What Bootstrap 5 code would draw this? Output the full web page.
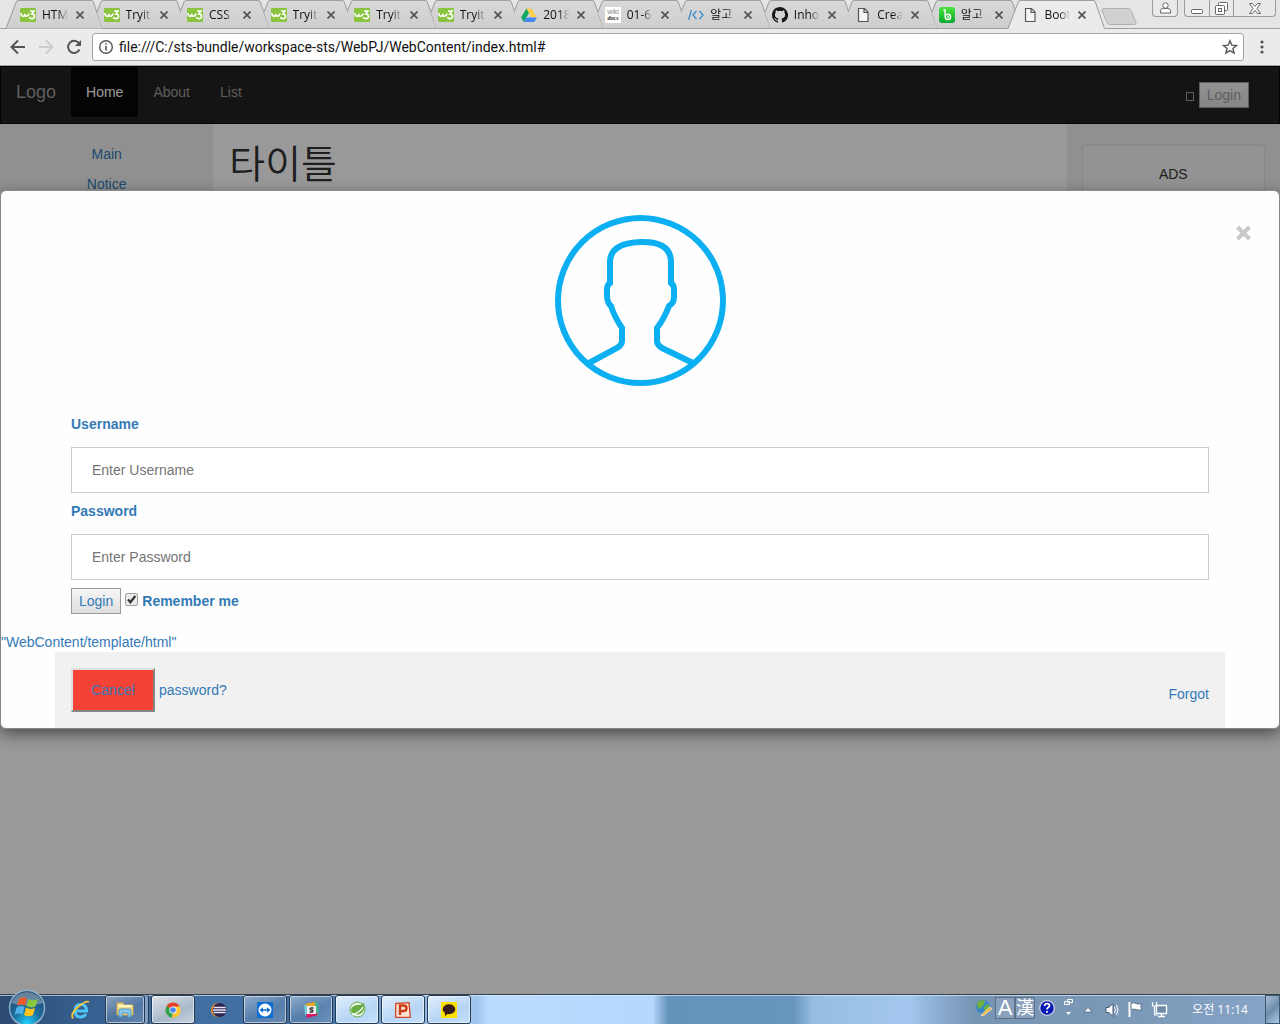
<!DOCTYPE html>
<html lang="ko">
<head>
<meta charset="utf-8">
<meta name="viewport" content="width=device-width, initial-scale=1">
<title>Bootstrap Example</title>
<link href="https://cdn.jsdelivr.net/npm/bootstrap@5.3.0/dist/css/bootstrap.min.css" rel="stylesheet">
<style>
body{font-family:"Liberation Sans","Noto Sans CJK KR",Arial,sans-serif;font-size:14px;line-height:20px;color:#333;background:#fff}
a{text-decoration:none}
.desk{min-height:100vh}
svg{display:block}
/* browser frame */
.strip{height:29px;background:#e5e5e5;border-bottom:1px solid #a0a0a0;padding-left:6px;font-family:"Open Sans","Noto Sans CJK KR",sans-serif;font-size:12px}
.tabs{min-width:0;height:29px;z-index:1}
.tab{flex:1 1 0;min-width:0;height:29px;position:relative;padding:7px 0 0 14px;color:#222}
.tab-shape{position:absolute;left:0;top:0;width:calc(100% + 13px);height:29px}
.tab-in{position:relative;gap:6px;height:16px}
.tab-title{width:26px;line-height:16px;white-space:nowrap;overflow:hidden;-webkit-mask-image:linear-gradient(90deg,#000 60%,transparent);mask-image:linear-gradient(90deg,#000 60%,transparent);color:#111}
.tab-x,.plain{border:0;background:none;padding:0}
.tab-x{margin-left:2px;display:block}
.strip-end{width:188px;height:28px;padding:0 4px 0 9px}
.winbox{height:17px;border:1px solid #9b9b9b;border-top:0;border-radius:0 0 4px 4px;background:#e9e9e9}
.winbox button{height:16px;border:0;background:none;padding:0;display:flex;align-items:center;justify-content:center}
.winbox button+button{border-left:1px solid #9b9b9b}
.winbox.ctl{margin-left:6px}
.w-s{width:24px}.w-l{width:42px}
.tools{height:37px;background:#ebebeb;border-bottom:1px solid #a0a0a0;padding:0 16px 0 10px}
.tools .nav-ic{gap:12px;width:82px}
.omni{height:28px;background:#fff;border:1px solid #a6a6a6;border-radius:3px;padding:0 5px;margin-right:16px}
.omni input{border:0;outline:0;padding:0;background:none;font-family:Roboto,"Noto Sans CJK KR",sans-serif;font-size:14px;line-height:20px;height:20px;color:#111;min-width:0;margin-left:5px}
/* page */
.stack{display:grid;grid-template:1fr/minmax(0,1fr)}
.stack>*{grid-area:1/1}
.topnav{background:#222;border:1px solid #080808;height:58px}
.topnav .brand{font-size:18px;padding:15px;color:#9d9d9d}
.topnav .lnk{padding:15px;height:50px;color:#9d9d9d}
.topnav .lnk.on{background:#080808;color:#fff}
.login-link{padding:15px 30px 0 0;gap:5px;color:#9d9d9d}
.tofu{width:8px;height:9px;border:1px solid #9d9d9d;margin-top:10px}
.btn-old{height:26px;padding:0 7px;border:1px solid #9b9b9b;background:linear-gradient(#f6f6f6,#dedede);font-size:14px;line-height:20px;color:#337ab7}
.topnav .btn-old{color:#9d9d9d}
.side{background:#f1f1f1;padding:20px 15px}
.side p{margin-bottom:10px}
.side a,.foot a{color:#337ab7}
.well{min-height:20px;padding:19px;border:1px solid #e3e3e3;border-radius:4px;background:#f5f5f5;box-shadow:inset 0 1px 1px rgba(0,0,0,.05)}
.ttl{font-size:39px;line-height:42px;font-weight:350;margin:20px 0 10px}
.main{padding:0 16px}
.shade{background:rgba(0,0,0,.4);padding-top:60px;z-index:2;color:#337ab7}
.sheet{margin-top:5%;background:#fefefe;border:1px solid #888;border-radius:6px;box-shadow:0 5px 15px rgba(0,0,0,.5)}
.face{padding:24px 24px 12px;position:relative}
.close-x{position:absolute;right:27px;top:33px}
.wrap{max-width:1170px;margin:0 auto;padding:16px}
form.wrap{padding-bottom:18px}
.fld-label{font-weight:700;margin-bottom:13px;display:block}
.fld{display:block;width:100%;height:46px;margin:0 0 8px;padding:12px 20px;border:1px solid #ccc;font-size:14px;line-height:20px;color:#555}
.fld::placeholder{color:#757575;opacity:1}
.tick{appearance:none;width:13px;height:13px;border:1px solid #a0a0a0;border-radius:2px;margin:5px 0 0;background:#e9e9e9 url("data:image/svg+xml,%3Csvg xmlns='http://www.w3.org/2000/svg' viewBox='0 0 11 11'%3E%3Cpath d='M2 5.5l2.400 2.800L9.300 2' fill='none' stroke='%23333' stroke-width='2.2'/%3E%3C/svg%3E")}
.tick-label{font-weight:700;padding-top:3px}
.foot{background:#f1f1f1}
.cancel{height:44px;width:84px;border:2px solid;border-color:#e0e0e0 #868686 #868686 #e0e0e0;background:#f44336;color:#337ab7;padding:0}
/* taskbar */
.taskbar{height:30px;border-top:1px solid #33414f;box-shadow:inset 0 1px 0 rgba(230,240,255,.65);z-index:3;color:#fff;
background:linear-gradient(90deg,#2c4a72 0,#365d8d 6%,#426fa2 14%,#426fa2 24%,#4f7fb0 28%,#7aa4cf 30%,#a7cdf4 36.5%,#9fc5ee 37.2%,#badcff 38.2%,#b5d7fb 51%,#6392ba 52.2%,#6795bd 62%,#98bde3 63.5%,#a3c7ee 71%,#8db0d6 73%,#7894b3 76%,#7b98b8 88%,#86a5c6 100%)}
.start{width:44px;height:37px;margin:-7px 0 0 5px}
.task{width:44px;height:29px;border:1px solid #253950;border-radius:3px;box-shadow:inset 0 0 0 1px rgba(255,255,255,.55);background:linear-gradient(155deg,rgba(255,255,255,.42),rgba(255,255,255,.1) 55%,rgba(255,255,255,.2));padding:0;display:flex;align-items:center;justify-content:center}
.task.hot{background:linear-gradient(155deg,#dfe4ea,#a9b8ca 60%,#c9d4e0)}
.task.lit{background:linear-gradient(155deg,#e2effc,#b5d5f5 60%,#c5e0fb)}
.task.bare{border-color:transparent;box-shadow:none;background:none}
.task.pile{width:40px;margin-right:4px;box-shadow:inset 0 0 0 1px rgba(255,255,255,.55),3px 0 0 #7f9fc4,4px 0 0 #253950}
.tasks{gap:2px;margin-left:10px}
.clock{font-family:"Open Sans","Noto Sans CJK KR",sans-serif;font-size:12px;line-height:29px;width:76px;text-align:center;margin-left:14px}
.tray{height:29px}
.ime{width:20px;height:22px;border:1px solid #5c7188;background:rgba(255,255,255,.12);font-size:18px;line-height:20px;text-align:center}
.ime.lat{font-size:22px;margin-left:2px}
.help{margin-left:3px}.g7{margin-left:7px}.g8{margin-left:8px}.g9{margin-left:9px}.g12{margin-left:12px}
.peek{width:15px;height:29px;border:1px solid #40566e;background:linear-gradient(135deg,#a8bed5,#6e8dad 50%,#a9cdec)}
</style>
<script src="https://cdn.jsdelivr.net/npm/bootstrap@5.3.0/dist/js/bootstrap.bundle.min.js"></script>
</head>
<body>
<svg width="0" height="0" class="position-absolute" aria-hidden="true">
<defs><linearGradient id="tg" x2="0" y2="1"><stop stop-color="#d9d9d9"/><stop offset="1" stop-color="#cecece"/></linearGradient>
<linearGradient id="gb" x2="0" y2="1"><stop stop-color="#4be33c"/><stop offset="1" stop-color="#03a830"/></linearGradient></defs>
<symbol id="shape" viewBox="0 0 96 29" preserveAspectRatio="none"><path d="M11 .5L7 12l5 16h84L87 2.500q-1-2-2-2H13q-1 0-2 1z" fill="url(#tg)"/><path d="M7 12L11 2q1-1.500 2-1.500h72q1 0 2 2L96 28.500" fill="none" stroke="#a0a0a0"/></symbol>
<symbol id="shape1" viewBox="0 0 96 29" preserveAspectRatio="none"><path d="M0 28.500L10 2.500q1-2 2-2h73q1 0 2 2L96 28.500" fill="url(#tg)" stroke="#a0a0a0"/></symbol>
<symbol id="shapeA" viewBox="0 0 96 29" preserveAspectRatio="none"><path d="M0 28.500L10 2.500q1-2 2-2h73q1 0 2 2L96 28.500V29H0z" fill="#ebebeb"/><path d="M0 28.500L10 2.500q1-2 2-2h73q1 0 2 2L96 28.500" fill="none" stroke="#a0a0a0"/></symbol>
<symbol id="x" viewBox="0 0 8 8"><path d="M.5.5l7 7M7.500.5l-7 7" stroke="#555" stroke-width="1.700"/></symbol>
<symbol id="w3" viewBox="0 0 16 16"><rect y="1" width="16" height="14" rx="1" fill="#8ac43f"/><path d="M.8 6q.4 3.200 2.200 3.200t1.700-2.400q0 2.400 1.700 2.400T9 6.500M10 4h4L11.800 7q2.700 0 2.700 2.300T12 11.700q-2 0-2.700-1.500" fill="none" stroke="#fff" stroke-width="1.600"/></symbol>
<symbol id="drive" viewBox="0 0 16 16"><path d="M5.500 1.500L0 10.500l2.700 4.500L8 6z" fill="#11a861"/><path d="M5.500 1.500h5l5.500 9h-5.300z" fill="#ffcf48"/><path d="M5.300 10.500H16L13.300 15H2.700z" fill="#4387f5"/></symbol>
<symbol id="doc" viewBox="0 0 16 16"><path d="M3.500 1.500h6l3.500 3.500v9.500H3.500zM9 1.500V5.500h4" fill="#f4f4f4" stroke="#555" stroke-width="1.200"/></symbol>
<symbol id="code" viewBox="0 0 16 16"><path d="M3.500 3L.5 13M8.500 4L5 8l3.500 4M11.500 4L15 8l-3.500 4" fill="none" stroke="#3f8ec7" stroke-width="1.400"/></symbol>
<symbol id="gh" viewBox="0 0 16 16"><path fill="#161616" d="M8 0C3.580 0 0 3.580 0 8c0 3.540 2.290 6.530 5.470 7.590.4.070.55-.17.55-.38v-1.490c-2.010.37-2.530-.49-2.690-.94-.09-.23-.48-.94-.82-1.130-.28-.15-.68-.52-.01-.53.63-.01 1.080.58 1.230.82.72 1.210 1.870.87 2.330.66.07-.52.28-.87.51-1.070-1.780-.2-3.640-.89-3.640-3.950 0-.87.31-1.590.82-2.150-.08-.2-.36-1.020.08-2.120 0 0 .67-.21 2.200.82a7.600 7.600 0 0 1 4 0c1.530-1.040 2.200-.82 2.200-.82.44 1.100.16 1.920.08 2.120.51.56.82 1.270.82 2.150 0 3.070-1.870 3.750-3.650 3.950.29.25.54.73.54 1.480v2.200c0 .21.15.46.55.38A8 8 0 0 0 8 0z"/></symbol>
<symbol id="band" viewBox="0 0 16 16"><rect width="16" height="16" rx="3" fill="url(#gb)"/><path d="M4.500 3h1.700v7.500a2.700 2.700 0 1 0 2.700-3.300q-1.700 0-2.700 1.300" fill="none" stroke="#fff" stroke-width="1.500"/><circle cx="8.900" cy="10" r=".9" fill="#fff"/></symbol>
</svg>
<div class="desk d-flex flex-column">
<header>
<div class="strip d-flex">
<nav class="tabs d-flex flex-grow-1" aria-label="Tabs">
<div class="tab"><svg class="tab-shape"><use href="#shape1"/></svg><div class="tab-in d-flex align-items-center"><svg width="16" height="16"><use href="#w3"/></svg><span class="tab-title">HTM</span><button class="tab-x" aria-label="Close"><svg width="8" height="8"><use href="#x"/></svg></button></div></div>
<div class="tab"><svg class="tab-shape"><use href="#shape"/></svg><div class="tab-in d-flex align-items-center"><svg width="16" height="16"><use href="#w3"/></svg><span class="tab-title">Tryit</span><button class="tab-x" aria-label="Close"><svg width="8" height="8"><use href="#x"/></svg></button></div></div>
<div class="tab"><svg class="tab-shape"><use href="#shape"/></svg><div class="tab-in d-flex align-items-center"><svg width="16" height="16"><use href="#w3"/></svg><span class="tab-title">CSS</span><button class="tab-x" aria-label="Close"><svg width="8" height="8"><use href="#x"/></svg></button></div></div>
<div class="tab"><svg class="tab-shape"><use href="#shape"/></svg><div class="tab-in d-flex align-items-center"><svg width="16" height="16"><use href="#w3"/></svg><span class="tab-title">Tryit</span><button class="tab-x" aria-label="Close"><svg width="8" height="8"><use href="#x"/></svg></button></div></div>
<div class="tab"><svg class="tab-shape"><use href="#shape"/></svg><div class="tab-in d-flex align-items-center"><svg width="16" height="16"><use href="#w3"/></svg><span class="tab-title">Tryit</span><button class="tab-x" aria-label="Close"><svg width="8" height="8"><use href="#x"/></svg></button></div></div>
<div class="tab"><svg class="tab-shape"><use href="#shape"/></svg><div class="tab-in d-flex align-items-center"><svg width="16" height="16"><use href="#w3"/></svg><span class="tab-title">Tryit</span><button class="tab-x" aria-label="Close"><svg width="8" height="8"><use href="#x"/></svg></button></div></div>
<div class="tab"><svg class="tab-shape"><use href="#shape"/></svg><div class="tab-in d-flex align-items-center"><svg width="16" height="16"><use href="#drive"/></svg><span class="tab-title">2018</span><button class="tab-x" aria-label="Close"><svg width="8" height="8"><use href="#x"/></svg></button></div></div>
<div class="tab"><svg class="tab-shape"><use href="#shape"/></svg><div class="tab-in d-flex align-items-center"><svg width="16" height="16" viewBox="0 0 16 16"><rect width="16" height="16" fill="#fff"/><text x="8" y="7" font-size="7" text-anchor="middle" fill="#888" font-family="Liberation Sans">wiki</text><text x="8" y="13" font-size="6" font-weight="700" font-style="italic" text-anchor="middle" fill="#222" font-family="Liberation Serif">docs</text></svg><span class="tab-title">01-6</span><button class="tab-x" aria-label="Close"><svg width="8" height="8"><use href="#x"/></svg></button></div></div>
<div class="tab"><svg class="tab-shape"><use href="#shape"/></svg><div class="tab-in d-flex align-items-center"><svg width="16" height="16"><use href="#code"/></svg><span class="tab-title">알고</span><button class="tab-x" aria-label="Close"><svg width="8" height="8"><use href="#x"/></svg></button></div></div>
<div class="tab"><svg class="tab-shape"><use href="#shape"/></svg><div class="tab-in d-flex align-items-center"><svg width="16" height="16"><use href="#gh"/></svg><span class="tab-title">Inho</span><button class="tab-x" aria-label="Close"><svg width="8" height="8"><use href="#x"/></svg></button></div></div>
<div class="tab"><svg class="tab-shape"><use href="#shape"/></svg><div class="tab-in d-flex align-items-center"><svg width="16" height="16"><use href="#doc"/></svg><span class="tab-title">Crea</span><button class="tab-x" aria-label="Close"><svg width="8" height="8"><use href="#x"/></svg></button></div></div>
<div class="tab"><svg class="tab-shape"><use href="#shape"/></svg><div class="tab-in d-flex align-items-center"><svg width="16" height="16"><use href="#band"/></svg><span class="tab-title">알고</span><button class="tab-x" aria-label="Close"><svg width="8" height="8"><use href="#x"/></svg></button></div></div>
<div class="tab"><svg class="tab-shape"><use href="#shapeA"/></svg><div class="tab-in d-flex align-items-center"><svg width="16" height="16"><use href="#doc"/></svg><span class="tab-title">Boot</span><button class="tab-x" aria-label="Close"><svg width="8" height="8"><use href="#x"/></svg></button></div></div>
</nav>
<div class="strip-end d-flex align-items-start">
<button class="plain pt-2 lh-1" aria-label="New tab"><svg width="36" height="17"><path d="M3 .5h24q2 0 3 2l5 12q.5 2-1.500 2H9q-2 0-3-2l-5-12q-.5-2 2-2z" fill="#d0d0d0" stroke="#b0b0b0"/></svg></button>
<div class="winbox d-flex ms-auto"><button class="w-s" aria-label="Profile"><svg width="11" height="12" viewBox="0 0 11 12"><circle cx="5.500" cy="3.500" r="2.700" fill="#fff" stroke="#666"/><path d="M.5 11V8.500q0-2 3-2h4q3 0 3 2V11z" fill="#fff" stroke="#666"/></svg></button></div>
<div class="winbox ctl d-flex">
<button class="w-s" aria-label="Minimize"><svg width="12" height="12"><rect x=".5" y="7.500" width="11" height="4" rx="1" fill="#fff" stroke="#666"/></svg></button>
<button class="w-s" aria-label="Restore"><svg width="13" height="13"><rect x="3.500" y=".5" width="9" height="8" rx="1" fill="#fff" stroke="#666"/><rect x=".5" y="3.500" width="9" height="9" rx="1" fill="#fff" stroke="#666"/><rect x="3.500" y="6.500" width="3" height="3" fill="none" stroke="#666"/></svg></button>
<button class="w-l" aria-label="Close window"><svg width="12" height="11"><path d="M.5.5h3L6 3.500 8.500.5h3L8 5.500l3.500 5h-3L6 7.500l-2.500 3h-3L4 5.500z" fill="#fff" stroke="#666"/></svg></button></div>
</div>
</div>
<div class="tools d-flex align-items-center">
<div class="nav-ic d-flex align-items-center">
<button class="plain" aria-label="Back"><svg width="16" height="16"><path d="M15 8H2M8 1.500L1.500 8 8 14.500" fill="none" stroke="#555" stroke-width="2"/></svg></button>
<button class="plain" aria-label="Forward"><svg width="16" height="16"><path d="M1 8h13M8 1.500L14.500 8 8 14.500" fill="none" stroke="#ccc" stroke-width="2"/></svg></button>
<button class="plain" aria-label="Reload"><svg width="16" height="16"><path d="M13.500 10.500a6 6 0 1 1-.8-6.500" fill="none" stroke="#555" stroke-width="2"/><path d="M15 1v6H9z" fill="#555"/></svg></button>
</div>
<div class="omni d-flex align-items-center flex-grow-1">
<svg width="16" height="16"><circle cx="8" cy="8" r="6.300" fill="none" stroke="#555" stroke-width="1.400"/><path d="M8 7v4.500M8 4.200v1.600" stroke="#555" stroke-width="1.600"/></svg>
<input class="flex-grow-1" type="text" aria-label="Address" value="file:///C:/sts-bundle/workspace-sts/WebPJ/WebContent/index.html#">
<button class="plain" aria-label="Bookmark"><svg width="16" height="16" viewBox="0 0 16 16"><path d="M8 1.800l1.800 4.400 4.700.3-3.600 3 1.200 4.600L8 11.600l-4.100 2.500 1.200-4.600-3.600-3 4.700-.3z" fill="none" stroke="#555" stroke-width="1.400"/></svg></button>
</div>
<button class="plain" aria-label="Menu"><svg width="4" height="14"><g fill="#555"><circle cx="2" cy="2" r="1.600"/><circle cx="2" cy="7" r="1.600"/><circle cx="2" cy="12" r="1.600"/></g></svg></button>
</div>
</header>
<main class="stack flex-grow-1">
<div class="d-flex flex-column">
<nav class="topnav d-flex">
<a class="brand" href="#">Logo</a>
<a class="lnk on" href="#">Home</a><a class="lnk" href="#">About</a><a class="lnk" href="#">List</a>
<div class="login-link d-flex ms-auto align-items-start"><span class="tofu"></span><button class="btn-old">Login</button></div>
</nav>
<div class="row g-0">
<aside class="col-2 side text-center"><p><a href="#">Main</a></p><p><a href="#">Notice</a></p></aside>
<section class="col-8 main"><h1 class="ttl">타이틀</h1></section>
<aside class="col-2 side text-center"><div class="well"><p>ADS</p></div></aside>
</div>
</div>
<div class="shade">
<div class="sheet" role="dialog" aria-label="Login">
<div class="face d-flex justify-content-center">
<svg width="171" height="171" viewBox="0 0 171 171" fill="none" stroke="#0caff2" stroke-width="6"><circle cx="85.500" cy="85.500" r="82.500"/><path d="M34 148L62 133q5-3 5-7V113Q59 101 56 91Q52 88 52 80V74Q52 70 55 68V46Q56 28 85.500 27T116 46V68Q119 70 119 74V82Q119 88 114 91Q109 104 102 113V126q0 4 5 7L138 148"/></svg>
<button class="plain close-x" aria-label="Close"><svg width="17" height="17"><path d="M2.500 3L14.500 15M14.500 3L2.500 15" stroke="#c8c8c8" stroke-width="4"/></svg></button>
</div>
<form class="wrap">
<label class="fld-label" for="u">Username</label><input class="fld" id="u" type="text" placeholder="Enter Username">
<label class="fld-label" for="p">Password</label><input class="fld" id="p" type="password" placeholder="Enter Password">
<div class="d-flex gap-1"><button class="btn-old" type="button">Login</button><input class="tick" type="checkbox" id="r" checked><label class="tick-label" for="r">Remember me</label></div>
</form>
<div>"WebContent/template/html"</div>
<div class="wrap foot d-flex align-items-center gap-1"><button class="cancel" type="button">Cancel</button><span>password?</span><a class="ms-auto pt-2" href="#">Forgot</a></div>
</div>
</div>
</main>
<footer class="taskbar d-flex">
<button class="plain start" aria-label="Start"><svg width="44" height="37" viewBox="0 0 44 37"><defs><radialGradient id="orb" cx=".5" cy=".95" r=".9"><stop stop-color="#1fd4ff"/><stop offset=".45" stop-color="#1c6f9f"/><stop offset="1" stop-color="#24486c"/></radialGradient></defs><circle cx="22" cy="20" r="17.500" fill="url(#orb)" stroke="#8fb0c8" stroke-width="1.500"/><path d="M6 15Q12 4 22 4t16 11Q22 20 6 15z" fill="#fff" opacity=".3"/><path d="M14 11q4-3 8-.5l-2 7q-4-2-8 .5z" fill="#ee5a28"/><path d="M23.500 11q4 2.500 9.500 0l-2.500 7.500q-5 2-9-.5z" fill="#8dc63f"/><path d="M11.500 19.500q4-2.500 8-.5l-2 7.500q-4-2-8 .5z" fill="#4fb1ea"/><path d="M21 19.500q4 2.500 9 .5L28 27q-5 2.500-9 0z" fill="#fdc51a"/></svg></button>
<div class="tasks d-flex">
<button class="task bare" aria-label="Internet Explorer"><svg width="20" height="20" viewBox="0 0 20 20" fill="none"><path d="M15 14q-2 3-5.500 3Q4 17 4 10.500T10 4.500q5.500 0 5.500 6.500H5" stroke="#4cc3f4" stroke-width="3"/><path d="M2 18.500Q-1 14 7 7T18 2" stroke="#f5c63c" stroke-width="1.800"/></svg></button>
<button class="task pile" aria-label="Explorer"><svg width="18" height="17" viewBox="0 0 18 17"><path d="M1 2h6l1 2h9v10H1z" fill="#f3dc86" stroke="#d1ac48"/><path d="M2 5h14" stroke="#fff6c8" stroke-width="2"/><path d="M3 16V10q0-2 2-2h8q2 0 2 2v6h-3v-4H6v4z" fill="#8cc9ef" stroke="#4a97c9"/></svg></button>
<button class="task hot" aria-label="Chrome"><svg width="16" height="16" viewBox="0 0 16 16"><circle cx="8" cy="8" r="7.500" fill="#fcc934"/><path d="M8 8L1.500 4.250A7.500 7.500 0 0 1 14.500 4.250z" fill="#e1402f"/><path d="M8 8V4.500h6.700A7.500 7.500 0 0 1 8 15.500z" fill="#fcc934"/><path d="M8 8l-1 7.500A7.500 7.500 0 0 1 1.500 4.250z" fill="#31a350"/><circle cx="8" cy="8" r="3.600" fill="#fff"/><circle cx="8" cy="8" r="2.800" fill="#4a87ee"/></svg></button>
<button class="task bare" aria-label="Eclipse"><svg width="16" height="16" viewBox="0 0 16 16"><circle cx="7" cy="8" r="7" fill="#f7941e"/><circle cx="8.500" cy="8" r="7" fill="#2b2250"/><path d="M2.500 5.500h12M2 8h13M2.500 10.500h12" stroke="#e9e7f2" stroke-width="1.300"/></svg></button>
<button class="task" aria-label="TeamViewer"><svg width="16" height="16" viewBox="0 0 16 16"><path fill="#0b6ed0" d="M0 0h16v16H0z"/><circle cx="8" cy="8" r="6.500" fill="#fff"/><path d="M2.500 8l3.500-2.700v1.900h4V5.300L13.500 8 10 10.700V8.800H6v1.900z" fill="#0b6ed0"/></svg></button>
<button class="task" aria-label="Slack"><svg width="15" height="16" viewBox="0 0 15 16"><path d="M1 2l10-2 1 4-9 2z" fill="#e9a820"/><path d="M11 0l3 1 1 12-3 1z" fill="#3eb890"/><path d="M0 3l3 1 1 10-3-1z" fill="#70cadb"/><path d="M2 12l10-2 2 3-11 3z" fill="#e01563"/><path d="M3 4h9v8H3z" fill="#eee"/><path d="M9.500 6H7q-1 0-1 1t1.500 1 1.500 1-1 1H5.500" fill="none" stroke="#333" stroke-width="1.300"/></svg></button>
<button class="task lit" aria-label="Spring"><svg width="17" height="17" viewBox="0 0 17 17"><circle cx="8.500" cy="8.500" r="7.500" fill="#e9f4e4" stroke="#68ac45"/><path d="M15 1Q17 13 8 13.500 2 13 2 8.500 3.500 4 9 4T15 1z" fill="#68ac45"/><path d="M3 13.500Q11 12 14 6" stroke="#fff" fill="none" stroke-width="1.400"/></svg></button>
<button class="task lit" aria-label="PowerPoint"><svg width="16" height="16" viewBox="0 0 16 16"><path d="M.7 1.500L14 .7l1.300 14.600H.7z" fill="#fbe0d2" stroke="#d24625" stroke-width="1.300"/><path d="M5 13V3.500h3.500q3 0 3 2.700t-3 2.800H6" fill="none" stroke="#cb3d16" stroke-width="2.400"/></svg></button>
<button class="task lit" aria-label="KakaoTalk"><svg width="16" height="16" viewBox="0 0 16 16"><path fill="#fbe000" d="M0 0h16v16H0z"/><ellipse cx="8" cy="7.300" rx="6.200" ry="5" fill="#371d1e"/><path d="M4 10v4l4-3z" fill="#371d1e"/></svg></button>
</div>
<div class="tray d-flex align-items-center ms-auto">
<svg class="mb-1" width="18" height="18" viewBox="0 0 18 18"><circle cx="8" cy="8" r="7" fill="#3b86c4"/><path d="M2 4q4-4 8-2l-2 5-5 3zM9 8l5-3v5l-4 5z" fill="#6fb53c"/><path d="M6 16l9-8 2 2-9 7z" fill="#f5b335" stroke="#fff" stroke-width=".6"/></svg>
<span class="ime lat mb-1">A</span><span class="ime mb-1">漢</span>
<svg class="help mb-1" width="18" height="18" viewBox="0 0 18 18"><circle cx="9" cy="9" r="7.300" fill="#0a1bb5" stroke="#c8cede" stroke-width="1.300"/><path d="M6.500 7q0-2.300 2.500-2.300t2.500 2q0 1-1.300 1.800T9 10.500M9 12v1.700" fill="none" stroke="#fff" stroke-width="1.700"/></svg>
<svg class="g8 mb-1" width="10" height="20" viewBox="0 0 10 20"><path d="M3.500 1.500h5v3h-5zM.5 3.500h5v3h-5z" fill="#7894b3" stroke="#fff"/><path d="M2 14h5l-2.500 3z" fill="#fff"/></svg>
<svg class="g9" width="10" height="7"><path d="M1 6l4-4.500L9 6z" fill="#fff" stroke="#4c6178" stroke-width=".7"/></svg>
<svg class="g12" width="15" height="16" viewBox="0 0 15 16"><path d="M1 5.500h3L8 1.500v13l-4-4H1z" fill="#fff" stroke="#465b72"/><path d="M9.500 5q2 3 0 6M11.500 3q3 5 0 10" fill="none" stroke="#fff"/></svg>
<svg class="g7" width="16" height="17" viewBox="0 0 16 17"><path d="M2.500 1v15" stroke="#fff" stroke-width="2"/><path d="M4 2.500q3-1.500 5 0t6 0l-1.500 3L15 8.500q-4 1-6 0t-5 0z" fill="#fff" stroke="#465b72" stroke-width=".7"/></svg>
<svg class="g8" width="17" height="17" viewBox="0 0 17 17"><path d="M5.500 4.500h10v8h-10zM7 15.500h7M10.500 13v3" fill="#6f8aa8" stroke="#fff" stroke-width="1.400"/><path d="M1.500 1v4h4V1M3.500 5v9h3" fill="none" stroke="#fff" stroke-width="1.200"/></svg>
<span class="clock">오전 11:14</span>
<button class="peek p-0 g7" aria-label="Show desktop"></button>
</div>
</footer>
</div>
</body>
</html>
